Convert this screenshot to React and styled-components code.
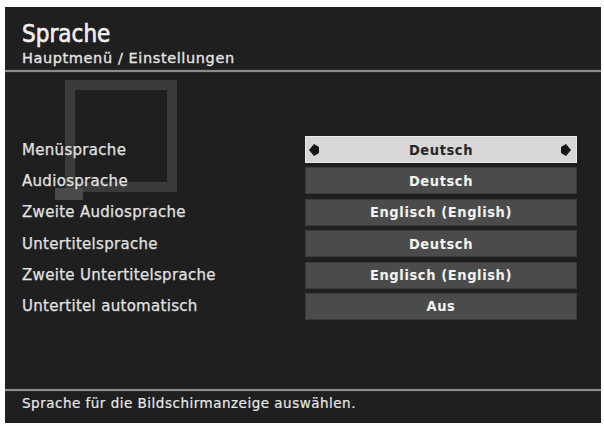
import React from "react";
import styled, { createGlobalStyle } from "styled-components";

const GlobalStyle = createGlobalStyle`
  html, body {
    margin: 0;
    padding: 0;
    background: #fdfdfd;
  }
  body {
    font-family: "DejaVu Sans", "Liberation Sans", sans-serif;
  }
`;

const rows = [
    {label: "Menüsprache", value: "Deutsch", selected: true},
    {label: "Audiosprache", value: "Deutsch"},
    {label: "Zweite Audiosprache", value: "Englisch (English)"},
    {label: "Untertitelsprache", value: "Deutsch"},
    {label: "Zweite Untertitelsprache", value: "Englisch (English)"},
    {label: "Untertitel automatisch", value: "Aus"},
];

function Arrow({dir}) {
    const pts = dir === "left" ? "0,6 5,0 10,3 10,9 5,12" : "10,6 5,0 0,3 0,9 5,12";
    return (
        <ArrowSvg viewBox="0 0 10 12">
            <polygon points={pts} fill="#141414"/>
        </ArrowSvg>
    );
}

export default function App() {
    return (
        <>
            <GlobalStyle/>
            <Screen>
                <Header>
                    <Title>Sprache</Title>
                    <Breadcrumb>Hauptmenü / Einstellungen</Breadcrumb>
                </Header>
                <Divider/>
                <Body>
                    <Watermark>
                        <WatermarkCorner/>
                    </Watermark>
                    <List>
                        {rows.map(row => (
                            <Row key={row.label}>
                                <Label>{row.label}</Label>
                                <Value selected={row.selected}>
                                    {row.selected ? <Arrow dir="left"/> : <span/>}
                                    <ValueText>{row.value}</ValueText>
                                    {row.selected ? <Arrow dir="right"/> : <span/>}
                                </Value>
                            </Row>
                        ))}
                    </List>
                </Body>
                <Divider/>
                <Footer>Sprache für die Bildschirmanzeige auswählen.</Footer>
            </Screen>
        </>
    );
}

const Screen = styled.div`
  margin: 7px 3px 0 5px;
  height: 416px;
  background: #1f1f1f;
  display: flex;
  flex-direction: column;
  color: #ececec;
  overflow: hidden;
`;

const Header = styled.div`
  height: 62px;
  box-sizing: border-box;
  padding: 14px 17px 0;
  display: flex;
  flex-direction: column;
`;

const Title = styled.div`
  font-family: "DejaVu Sans Condensed", "DejaVu Sans", sans-serif;
  font-size: 24px;
  line-height: 27px;
  color: #f0f0f0;
  -webkit-text-stroke: 0.6px #f0f0f0;
`;

const Breadcrumb = styled.div`
  font-size: 14.5px;
  line-height: 20px;
  letter-spacing: 0.6px;
  color: #e6e6e6;
  -webkit-text-stroke: 0.3px #e6e6e6;
`;

const Divider = styled.div`
  height: 2px;
  background: #8c8c8c;
  border-top: 1px solid #2a2a2a;
  border-bottom: 1px solid #2a2a2a;
`;

const Body = styled.div`
  flex: 1;
  position: relative;
  box-sizing: border-box;
  padding: 63px 24px 0 17px;
`;

const Watermark = styled.div`
  position: absolute;
  left: 60px;
  top: 7px;
  width: 112px;
  height: 112px;
  box-sizing: border-box;
  border: 10px solid #3b3b3b;
`;

const WatermarkCorner = styled.div`
  position: absolute;
  left: -20px;
  bottom: -18px;
  width: 28px;
  height: 12px;
  background: #4a4a4a;
`;

const List = styled.div`
  position: relative;
  display: flex;
  flex-direction: column;
  gap: 4.4px;
`;

const Row = styled.div`
  display: grid;
  grid-template-columns: 1fr 272px;
  align-items: center;
  height: 27px;
`;

const Label = styled.div`
  font-size: 15px;
  letter-spacing: 0.3px;
  color: #e2e2e2;
  -webkit-text-stroke: 0.25px #e2e2e2;
`;

const Value = styled.div`
  height: 100%;
  display: grid;
  grid-template-columns: 12px 1fr 12px;
  align-items: center;
  padding: 0 3px;
  box-sizing: border-box;
  background: ${p => p.selected ? "#d7d7d7" : "#4b4b4b"};
  color: ${p => p.selected ? "#262626" : "#f2f2f2"};
  border: 1px solid ${p => p.selected ? "#eaeaea" : "#3a3a3a"};
`;

const ValueText = styled.span`
  text-align: center;
  font-family: "DejaVu Sans Condensed", "DejaVu Sans", sans-serif;
  font-weight: bold;
  font-size: 14.5px;
  letter-spacing: 0.6px;
`;

const ArrowSvg = styled.svg`
  width: 10px;
  height: 12px;
`;

const Footer = styled.div`
  height: 31px;
  box-sizing: border-box;
  padding: 3px 17px 0;
  font-size: 13.5px;
  letter-spacing: 0.5px;
  color: #e6e6e6;
  -webkit-text-stroke: 0.2px #e6e6e6;
`;
